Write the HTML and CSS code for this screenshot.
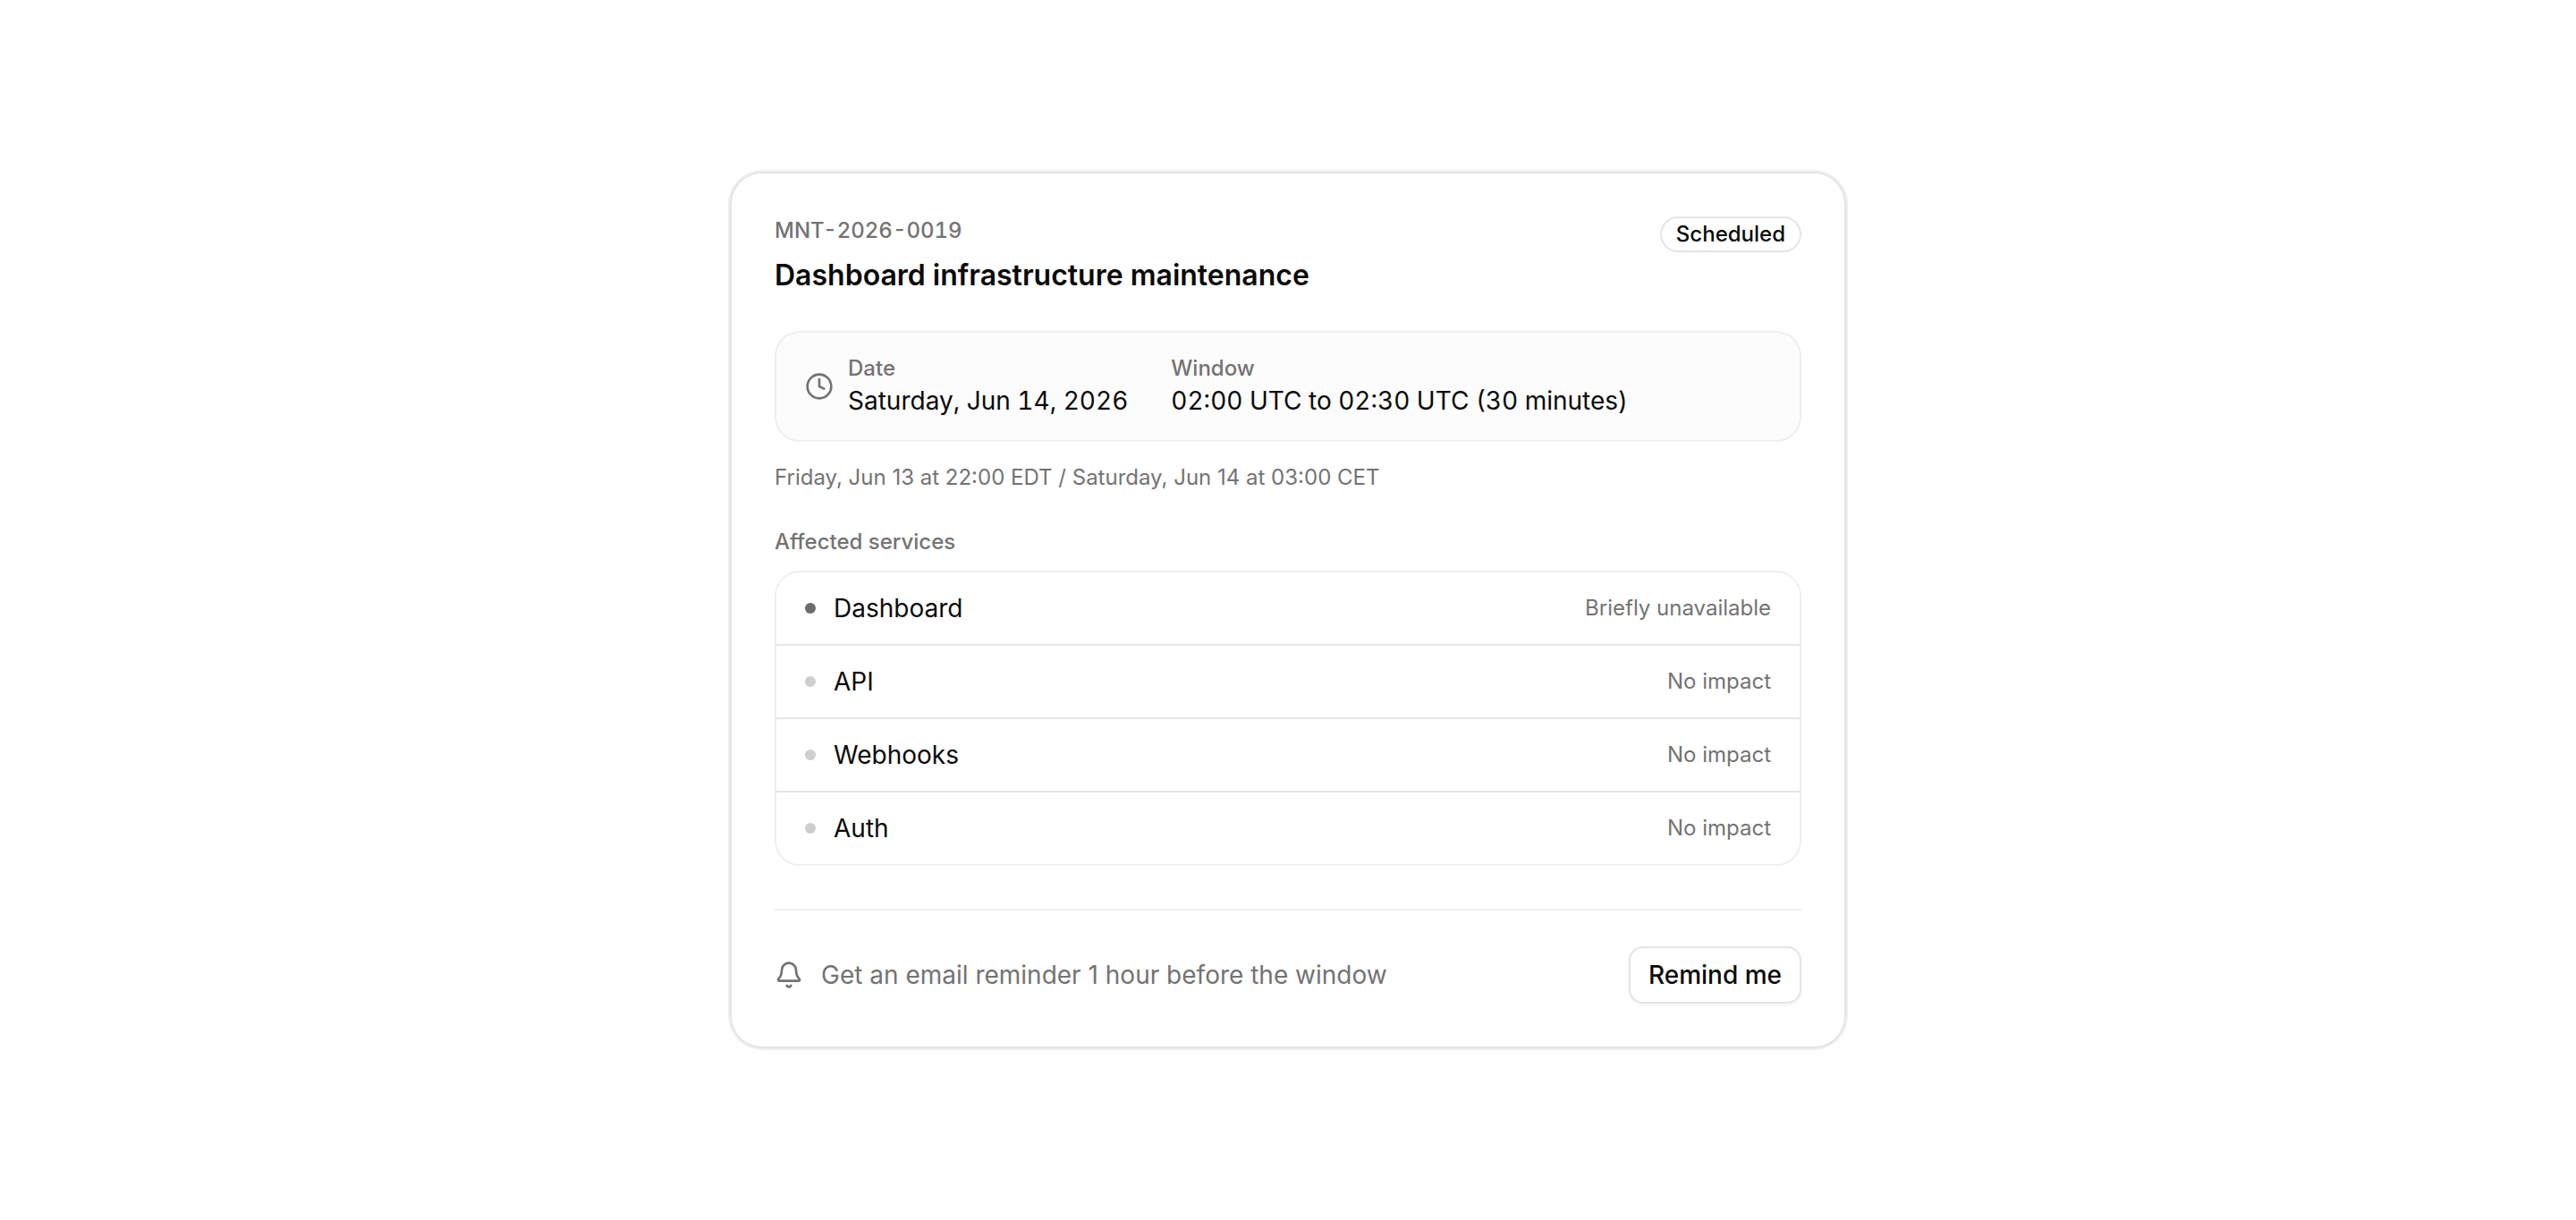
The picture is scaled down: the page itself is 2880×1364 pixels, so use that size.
FILE: index.html
```html
<!DOCTYPE html>
<html lang="en">
<head>
<meta charset="utf-8">
<meta name="viewport" content="width=device-width, initial-scale=1">
<title>Dashboard infrastructure maintenance</title>
<link rel="stylesheet" href="styles.css">
</head>
<body>
<main class="page">
  <article class="card">
    <header class="card-header">
      <div class="heading">
        <p class="reference">MNT-2026-0019</p>
        <h1 class="title">Dashboard infrastructure maintenance</h1>
      </div>
      <span class="badge">Scheduled</span>
    </header>

    <section class="schedule">
      <div class="schedule-box">
        <svg class="icon" viewBox="0 0 24 24" aria-hidden="true">
          <circle cx="12" cy="12" r="10"/>
          <path d="M12 6v6l4 2"/>
        </svg>
        <dl class="times">
          <div>
            <dt class="label">Date</dt>
            <dd class="value">Saturday, Jun 14, 2026</dd>
          </div>
          <div>
            <dt class="label">Window</dt>
            <dd class="value">02:00 UTC to 02:30 UTC (30 minutes)</dd>
          </div>
        </dl>
      </div>
      <p class="local-times">Friday, Jun 13 at 22:00 EDT / Saturday, Jun 14 at 03:00 CET</p>
    </section>

    <section class="services">
      <h2 class="services-title">Affected services</h2>
      <ul class="service-list">
        <li class="service">
          <span class="dot dot-affected"></span>
          <span class="service-name">Dashboard</span>
          <span class="impact">Briefly unavailable</span>
        </li>
        <li class="service">
          <span class="dot"></span>
          <span class="service-name">API</span>
          <span class="impact">No impact</span>
        </li>
        <li class="service">
          <span class="dot"></span>
          <span class="service-name">Webhooks</span>
          <span class="impact">No impact</span>
        </li>
        <li class="service">
          <span class="dot"></span>
          <span class="service-name">Auth</span>
          <span class="impact">No impact</span>
        </li>
      </ul>
    </section>

    <footer class="card-footer">
      <div class="reminder">
        <svg class="icon" viewBox="0 0 24 24" aria-hidden="true">
          <path d="M10.268 21a2 2 0 0 0 3.464 0"/>
          <path d="M3.262 15.326A1 1 0 0 0 4 17h16a1 1 0 0 0 .74-1.673C19.41 13.956 18 12.499 18 8A6 6 0 0 0 6 8c0 4.499-1.411 5.956-2.738 7.326"/>
        </svg>
        <p class="reminder-text">Get an email reminder 1 hour before the window</p>
      </div>
      <button class="button" type="button">Remind me</button>
    </footer>
  </article>
</main>
</body>
</html>
```

FILE: styles.css
```css
:root {
  --foreground: #0a0a0a;
  --muted: #737373;
  --border: #e5e5e5;
  --border-soft: #efefef;
}

*,
*::before,
*::after {
  box-sizing: border-box;
}

body,
h1,
h2,
p,
ul,
dl,
dd {
  margin: 0;
  padding: 0;
}

body {
  background: #fff;
  color: var(--foreground);
  font-family: Inter, "Liberation Sans", sans-serif;
  font-size: 28px;
  line-height: 40px;
}

.page {
  display: flex;
  align-items: center;
  justify-content: center;
  min-height: 100vh;
  padding: 48px;
}

.card {
  width: 100%;
  max-width: 1248px;
  padding: 48px;
  border: 2px solid var(--border);
  border-radius: 36px;
  box-shadow: 0 0 0 2px var(--border-soft);
}

.card-header {
  display: flex;
  align-items: flex-start;
  justify-content: space-between;
  gap: 32px;
}

.heading {
  display: grid;
  gap: 12px;
}

.reference {
  color: var(--muted);
  font-size: 24px;
  font-weight: 500;
  line-height: 32px;
  font-variant-numeric: tabular-nums;
}

.title {
  font-size: 32px;
  font-weight: 600;
  line-height: 44px;
}

.badge {
  flex-shrink: 0;
  padding: 2px 16px;
  border: 2px solid var(--border);
  border-radius: 20px;
  font-size: 24px;
  font-weight: 500;
  line-height: 32px;
}

.schedule {
  display: grid;
  gap: 24px;
  margin-top: 40px;
}

.schedule-box {
  display: flex;
  align-items: center;
  gap: 16px;
  padding: 24px 32px;
  border: 2px solid var(--border-soft);
  border-radius: 28px;
  background: #fcfcfc;
}

.icon {
  flex-shrink: 0;
  width: 32px;
  height: 32px;
  fill: none;
  stroke: var(--muted);
  stroke-width: 2;
  stroke-linecap: round;
  stroke-linejoin: round;
}

.times {
  display: flex;
  flex-wrap: wrap;
  column-gap: 48px;
}

.label {
  color: var(--muted);
  font-size: 24px;
  font-weight: 500;
  line-height: 32px;
}

.value {
  font-variant-numeric: tabular-nums;
}

.local-times {
  color: var(--muted);
  font-size: 24px;
  line-height: 32px;
}

.services {
  display: grid;
  gap: 16px;
  margin-top: 40px;
}

.services-title {
  color: var(--muted);
  font-size: 24px;
  font-weight: 500;
  line-height: 32px;
}

.service-list {
  overflow: hidden;
  border: 2px solid var(--border-soft);
  border-radius: 28px;
  list-style: none;
}

.service {
  display: flex;
  align-items: center;
  gap: 20px;
  padding: 20px 32px;
}

.service + .service {
  border-top: 2px solid var(--border);
}

.dot {
  flex-shrink: 0;
  width: 12px;
  height: 12px;
  border-radius: 50%;
  background: #cecece;
}

.dot-affected {
  background: #6c6c6c;
}

.service-name {
  flex: 1;
}

.impact {
  color: var(--muted);
  font-size: 24px;
  line-height: 32px;
}

.card-footer {
  display: flex;
  align-items: center;
  justify-content: space-between;
  gap: 32px;
  margin-top: 48px;
  padding-top: 40px;
  border-top: 2px solid var(--border-soft);
}

.reminder {
  display: flex;
  align-items: center;
  gap: 20px;
}

.reminder-text {
  color: var(--muted);
}

.button {
  flex-shrink: 0;
  padding: 10px 20px;
  border: 2px solid var(--border);
  border-radius: 16px;
  background: #fff;
  box-shadow: 0 2px 4px rgba(0, 0, 0, 0.05);
  color: inherit;
  font: inherit;
  font-weight: 500;
  cursor: pointer;
}
```
